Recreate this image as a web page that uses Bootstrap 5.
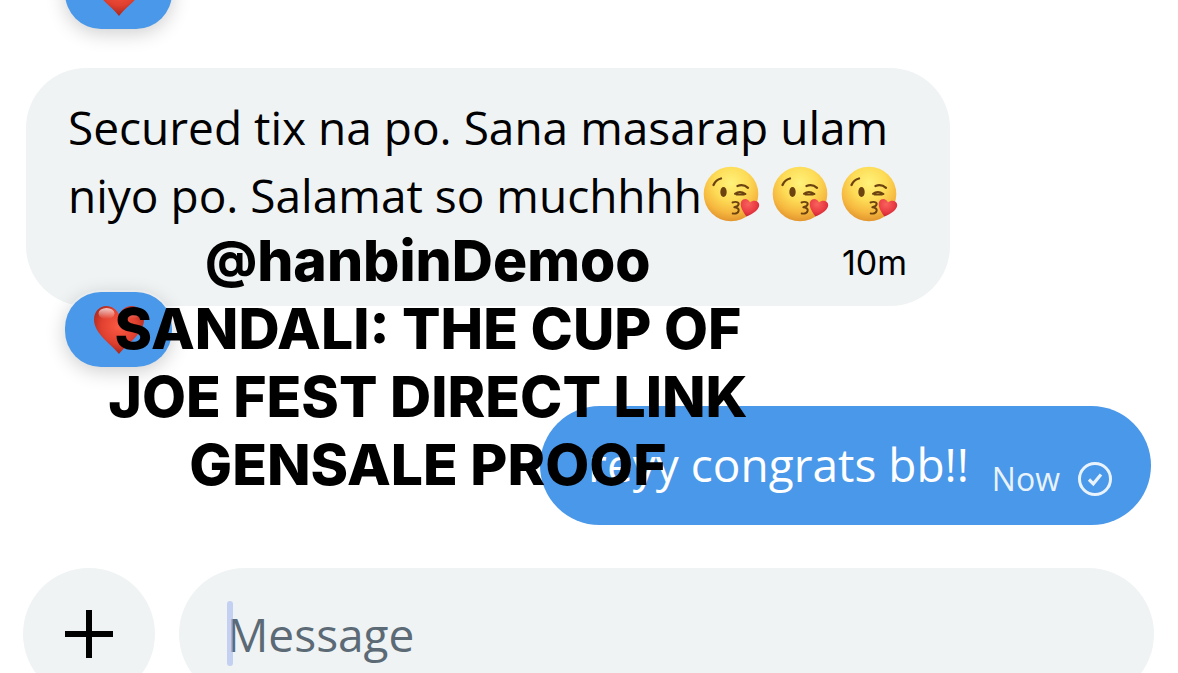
<!DOCTYPE html>
<html lang="tl">
<head>
<meta charset="utf-8">
<meta name="viewport" content="width=device-width, initial-scale=1">
<title>Direct message</title>
<link href="https://cdn.jsdelivr.net/npm/bootstrap@5.3.0/dist/css/bootstrap.min.css" rel="stylesheet">
<style>
  :root { --soft: #eff3f4; --sent: #4a98e9; --chat: "Open Sans", "Noto Sans", sans-serif; }
  body { background: #fff; color: #000; font: 400 46px/68px var(--chat); overflow: hidden; }
  .thread { padding: 0 27px 0 26px; }
  .reaction { width: 107px; height: 75px; border-radius: 36px; background: var(--sent); box-shadow: 0 4px 20px rgba(0,0,0,.2), 0 0 0 2px rgba(255,255,255,.5); }
  .reaction svg { width: 50px; height: 50px; }
  .reaction-prev { margin: -46px 0 39px 39px; }
  .reaction-on { left: 39px; bottom: -61px; }
  .bubble-in { background: var(--soft); border-radius: 60px; max-width: 924px; padding: 25px 43px 9px 42px; }
  .emoji { width: 60px; height: 60px; margin-right: 9px; }
  .stamp-in { font: 400 34px/68px Inter, sans-serif; }
  .bubble-out { background: var(--sent); color: #fff; border-radius: 60px; margin-top: 100px; padding: 24px 38px 27px 48px; }
  .stamp-out { font-size: 32px; line-height: 38px; gap: 17px; margin: 30px 0 0 23px; color: #e9f3fd; }
  .caption-text { left: 98px; top: 227px; width: 660px; font: 800 57px/68px Inter, sans-serif; }
  .caption-text .at { font-size: 50px; line-height: 1; vertical-align: 4px; }
  .composer { padding: 43px 24px 0 23px; gap: 24px; }
  .add { width: 132px; height: 132px; background: var(--soft); }
  .field { height: 132px; border-radius: 66px; background: var(--soft); padding: 0 48px; }
  .field input, .field input:focus { font-size: 46px; line-height: 68px; background: transparent; border: 0; padding: 0; box-shadow: none; }
  .field input::placeholder { color: #5b6a75; opacity: 1; }
  .cursor-bar { left: 48px; top: 33px; width: 6px; height: 65px; border-radius: 3px; background: rgba(160,178,238,.55); }
</style>
</head>
<body>
<svg width="0" height="0" class="position-absolute" aria-hidden="true">
  <defs>
    <radialGradient id="face" cx=".5" cy=".3" r=".72"><stop offset="0" stop-color="#fff27a"/><stop offset=".45" stop-color="#fddb56"/><stop offset=".75" stop-color="#f6b83f"/><stop offset="1" stop-color="#e0912c"/></radialGradient>
    <radialGradient id="kiss" cx=".4" cy=".3" r=".75"><stop offset="0" stop-color="#f8625c"/><stop offset=".6" stop-color="#ea3b44"/><stop offset="1" stop-color="#c32331"/></radialGradient>
    <radialGradient id="love" cx=".5" cy=".42" r=".6"><stop offset="0" stop-color="#fb5a43"/><stop offset=".6" stop-color="#e0402f"/><stop offset="1" stop-color="#a3241a"/></radialGradient>
    <linearGradient id="gloss" x1="0" y1="0" x2="0" y2="1"><stop offset="0" stop-color="#fff" stop-opacity=".75"/><stop offset="1" stop-color="#fff" stop-opacity="0"/></linearGradient>
    <symbol id="kissing" viewBox="0 0 60 60">
      <circle cx="29" cy="29" r="27.3" fill="url(#face)"/>
      <g fill="none" stroke="#6b4210" stroke-linecap="round" stroke-linejoin="round">
        <path d="M11.500 20c1.500-3.500 4-5.700 7.500-6.500" stroke-width="2.300"/>
        <path d="M35.500 21c3.500-1.400 7.500-.8 10.500 1.800" stroke-width="2.300"/>
        <path d="M33 28.800c2.800-2.300 7-2.200 10.500.2M34.500 29.500l7.500.1" stroke-width="2"/>
        <path d="M30.500 37.500c3-1.200 6.500-.4 6.200 1.700-.2 2-2.500 2.700-4.400 3.100 2.700.3 4.900 1.400 4.400 3.500-.5 2.500-3.400 3.200-6 2.700" stroke-width="1.900"/>
      </g>
      <ellipse cx="21.500" cy="27" rx="3.200" ry="4.900" fill="#6b4210"/>
      <path d="M44.500 51.500C41 47 37 40.500 39.500 36c2-3.200 7-2.700 8.500 1.500 2.800-3 7.900-2.200 9 1.200 1.600 5-6.300 10.500-12.500 12.800z" fill="url(#kiss)"/>
    </symbol>
    <symbol id="heart" viewBox="0 0 50 50">
      <path d="M25 49C18 39.500 0 29 0 14.500 0 6.500 5.500 1 12.500 1 18 1 22.500 4.500 25 9.500 27.500 4.500 32 1 37.500 1 44.500 1 50 6.500 50 14.500 50 29 32 39.500 25 49z" fill="url(#love)"/>
      <ellipse cx="12.500" cy="8.500" rx="8" ry="5.500" fill="url(#gloss)"/>
      <ellipse cx="37" cy="8.500" rx="8" ry="5.500" fill="url(#gloss)" opacity=".6"/>
    </symbol>
  </defs>
</svg>

<main class="thread position-relative">
  <div class="d-flex">
    <div class="reaction reaction-prev d-flex align-items-center justify-content-center"><svg role="img" aria-label="❤️"><use href="#heart"/></svg></div>
  </div>

  <div class="bubble-in position-relative">
    <div>Secured tix na po. Sana masarap ulam</div>
    <div class="d-flex align-items-center text-nowrap">
      <span>niyo po. Salamat so muchhhh</span>
      <svg class="emoji flex-shrink-0" role="img" aria-label="😘"><use href="#kissing"/></svg>
      <svg class="emoji flex-shrink-0" role="img" aria-label="😘"><use href="#kissing"/></svg>
      <svg class="emoji flex-shrink-0" role="img" aria-label="😘"><use href="#kissing"/></svg>
    </div>
    <div class="stamp-in text-end">10m</div>
    <div class="reaction reaction-on position-absolute d-flex align-items-center justify-content-center"><svg role="img" aria-label="❤️"><use href="#heart"/></svg></div>
  </div>

  <div class="d-flex justify-content-end">
    <div class="bubble-out d-flex text-nowrap">
      <span>reyy congrats bb!!</span>
      <span class="stamp-out d-flex align-items-center">Now
        <svg width="36" height="36" viewBox="0 0 36 36" fill="none" stroke="currentColor" stroke-width="3" role="img" aria-label="Sent"><circle cx="18" cy="18" r="15.500"/><path d="M12 18.500l4.300 4.300L24 13.500" stroke-width="3.200"/></svg>
      </span>
    </div>
  </div>

  <div class="caption-text position-absolute text-center text-nowrap">
    <div><span class="at">@</span>hanbinDemoo</div>
    <div>SANDALI: THE CUP OF</div>
    <div>JOE FEST DIRECT LINK</div>
    <div>GENSALE PROOF</div>
  </div>
</main>

<form class="composer d-flex">
  <button type="button" class="add btn rounded-circle border-0 p-0 flex-shrink-0 d-flex align-items-center justify-content-center" aria-label="Add">
    <svg width="48" height="48" viewBox="0 0 48 48" stroke="#000" stroke-width="6"><path d="M24 0v48M0 24h48"/></svg>
  </button>
  <div class="field position-relative flex-grow-1 d-flex align-items-center">
    <input type="text" class="form-control" placeholder="Message" aria-label="Message">
    <span class="cursor-bar position-absolute"></span>
  </div>
</form>
<script src="https://cdn.jsdelivr.net/npm/bootstrap@5.3.0/dist/js/bootstrap.bundle.min.js"></script>
</body>
</html>
